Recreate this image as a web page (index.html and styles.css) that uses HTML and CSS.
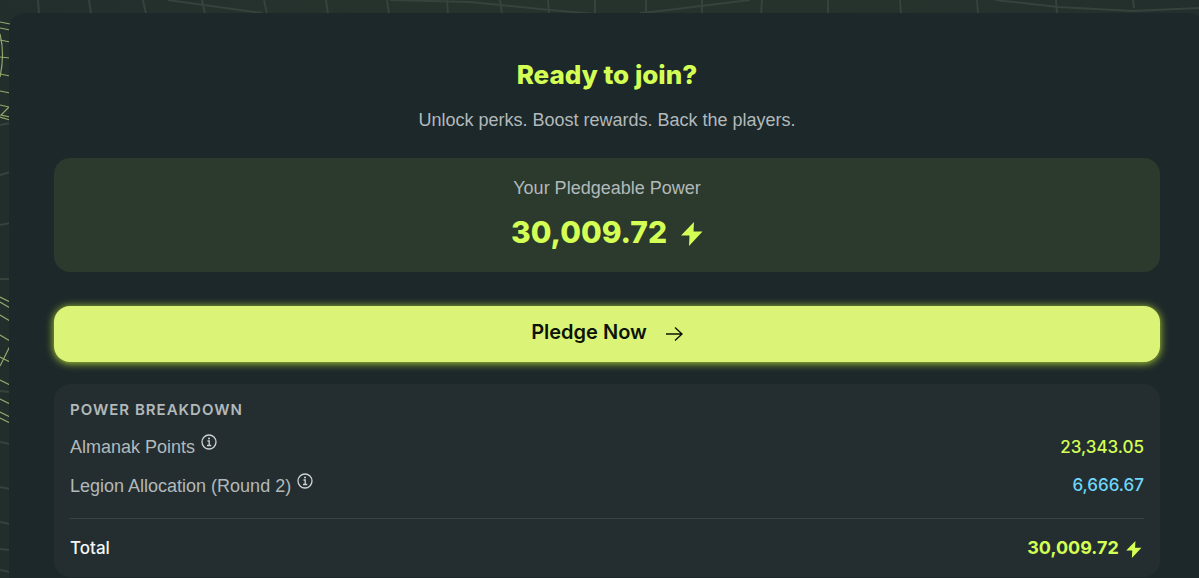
FILE: index.html
```html
<!DOCTYPE html>
<html lang="en">
<head>
  <meta charset="UTF-8">
  <meta name="viewport" content="width=device-width, initial-scale=1">
  <title>Ready to join?</title>
  <link rel="stylesheet" href="styles.css">
</head>
<body>
  <svg class="grid-bg" viewBox="0 0 1199 578" preserveAspectRatio="xMinYMin slice" aria-hidden="true">
    <g class="grid-dim">
      <path d="M38 0L39 14M89 0L91 14M143 0L146 14M202 0L205 14M264 0L267 14M326 0L328 14M387 0L389 14M447 0L448 14M500 0L502 14M548 0L549 14M595 0L595 14M646 0L646 14M702 0L702 14M762 0L761 14M828 0L828 14M900 0L901 14M977 0L978 14M1056 0L1057 14M1133 0L1134 8"/>
      <path d="M168 0L262 13M390 0L470 2L500 5L550 10L595 14M640 13L660 11L750 0M995 0L1058 7L1133 11L1199 8"/>
      <path d="M0 125L10 123M0 175L10 172M0 225L10 223M0 279L10 279M0 391L10 392M0 442L10 444M0 487L10 489M0 522L10 524M0 549L10 550M0 570L10 572"/>
    </g>
    <g class="grid-lime">
      <path d="M0 22L10 24M0 28L10 30M0 40L10 42M0 57L10 58M0 74L10 76M0 91L10 93M0 105L9 107L1 115L10 117M0 117L10 120"/>
      <path d="M0 34Q5 54 0 77"/>
      <path d="M0 297L10 302M0 302L10 308M0 315L10 321M0 335L10 341M0 357L10 362M0 380L10 385M0 399L10 404M0 412L10 417M0 418L10 423M0 366L10 346"/>
    </g>
  </svg>

  <main class="panel">
    <h1>Ready to join?</h1>
    <p class="subtitle">Unlock perks. Boost rewards. Back the players.</p>

    <section class="power-card">
      <p class="power-label">Your Pledgeable Power</p>
      <p class="power-value">
        30,009.72
        <svg class="bolt" viewBox="0 0 22 24" aria-hidden="true"><path d="M13 0L0 13.500H8.500L8 24L21.500 9.500H12.500Z"/></svg>
      </p>
    </section>

    <button type="button" class="pledge-btn">
      Pledge Now
      <svg class="arrow" viewBox="0 0 18 16" aria-hidden="true"><path d="M1 8H17M10 1.500L17 8L10 14.500"/></svg>
    </button>

    <section class="breakdown">
      <h2>Power Breakdown</h2>
      <table>
        <tbody>
          <tr>
            <th scope="row">Almanak Points
              <button type="button" class="info-btn" aria-label="About Almanak Points">
                <svg viewBox="0 0 16 16" aria-hidden="true"><circle cx="8" cy="8" r="7"/><path d="M6.500 7H8.200V11.500M6 11.500H10.200"/><circle class="dot" cx="8" cy="4.500" r="1"/></svg>
              </button>
            </th>
            <td class="lime">23,343.05</td>
          </tr>
          <tr>
            <th scope="row">Legion Allocation (Round 2)
              <button type="button" class="info-btn" aria-label="About Legion Allocation">
                <svg viewBox="0 0 16 16" aria-hidden="true"><circle cx="8" cy="8" r="7"/><path d="M6.500 7H8.200V11.500M6 11.500H10.200"/><circle class="dot" cx="8" cy="4.500" r="1"/></svg>
              </button>
            </th>
            <td class="blue">6,666.67</td>
          </tr>
        </tbody>
        <tfoot>
          <tr>
            <th scope="row">Total</th>
            <td class="lime">30,009.72
              <svg class="bolt" viewBox="0 0 22 24" aria-hidden="true"><path d="M13 0L0 13.500H8.500L8 24L21.500 9.500H12.500Z"/></svg>
            </td>
          </tr>
        </tfoot>
      </table>
    </section>
  </main>
</body>
</html>
```

FILE: styles.css
```css
* {
  box-sizing: border-box;
}
body {
  margin: 0;
  padding: 13px 0 0 9px;
  min-height: 100vh;
  overflow-x: hidden;
  background: linear-gradient(90deg, #222e2c, #26332d 30%, #26332d 70%, #222f2c);
  color: #b2b9bb;
  font-family: "Liberation Sans", Arial, sans-serif;
  font-size: 18px;
  line-height: 24px;
}
h1, h2, p {
  margin: 0;
}
.grid-bg {
  position: absolute;
  top: 0;
  left: 0;
  width: 100%;
  height: 100%;
  z-index: -1;
  fill: none;
}
.grid-dim {
  stroke: #35433d;
  stroke-width: 2;
}
.grid-lime {
  stroke: #93a96a;
  stroke-width: 1.2;
}

.panel {
  /* bleeds slightly past the right edge */
  margin-right: -6px;
  padding: 44px 45px 0;
  min-height: calc(100vh - 13px);
  border-radius: 16px 16px 0 0;
  background: #1d282a;
  text-align: center;
}
h1 {
  color: #d4ff54;
  font-family: Inter, sans-serif;
  font-size: 26px;
  font-weight: 800;
  line-height: 36px;
}
.subtitle {
  margin-top: 15px;
}

.power-card {
  margin-top: 26px;
  padding: 18px 16px 20px;
  border-radius: 16px;
  background: #2c392d;
}
.power-value {
  display: flex;
  justify-content: center;
  align-items: center;
  gap: 14px;
  margin-top: 12px;
  color: #d4ff54;
  font-family: Inter, sans-serif;
  font-size: 30px;
  font-weight: 800;
  line-height: 40px;
}
.bolt {
  width: 22px;
  height: 24px;
  fill: #d4ff54;
}
.power-value .bolt {
  margin-top: 4px;
}

.pledge-btn {
  display: flex;
  justify-content: center;
  align-items: center;
  gap: 18px;
  width: 100%;
  height: 56px;
  margin-top: 34px;
  padding: 0 16px 4px;
  border: none;
  border-radius: 16px;
  background: #dbf478;
  box-shadow: 0 1px 8px #b5dc37;
  color: #0c1406;
  font-family: Inter, sans-serif;
  font-size: 20px;
  font-weight: 600;
  cursor: pointer;
}
.arrow {
  width: 18px;
  height: 16px;
  margin-top: 4px;
  fill: none;
  stroke: #0c1406;
  stroke-width: 1.4;
}

.breakdown {
  margin-top: 22px;
  padding: 16px 16px 0;
  border-radius: 16px;
  background: #242e30;
  text-align: left;
}
h2 {
  margin-bottom: 7px;
  font-family: Inter, sans-serif;
  font-size: 15px;
  font-weight: 600;
  line-height: 20px;
  letter-spacing: 1px;
  text-transform: uppercase;
}
table {
  width: 100%;
  border-collapse: collapse;
}
th, td {
  height: 39px;
  padding: 0;
  font-weight: 400;
  text-align: left;
}
td {
  font-family: Inter, sans-serif;
  font-size: 17px;
  font-weight: 500;
  text-align: right;
}
tbody tr:last-child th,
tbody tr:last-child td {
  height: 52px;
  padding-bottom: 13px;
}
.info-btn {
  width: 16px;
  height: 16px;
  margin-left: 1px;
  padding: 0;
  border: none;
  background: none;
  vertical-align: 3px;
  cursor: pointer;
}
.info-btn svg {
  display: block;
  fill: none;
  stroke: #ccd2d3;
  stroke-width: 1.3;
}
.info-btn .dot {
  fill: #ccd2d3;
  stroke: none;
}
tfoot tr {
  border-top: 1px solid #3a4446;
}
tfoot th,
tfoot td {
  height: 59px;
}
tfoot th {
  color: #f3f5f5;
  font-family: Inter, sans-serif;
  font-size: 17px;
  font-weight: 500;
}
tfoot td {
  font-size: 18px;
  font-weight: 700;
}
tfoot .bolt {
  width: 16px;
  height: 17px;
  margin: 0 2px 0 3px;
  vertical-align: -4px;
}
.lime {
  color: #d4ff54;
}
.blue {
  color: #6fd6fa;
}
```
